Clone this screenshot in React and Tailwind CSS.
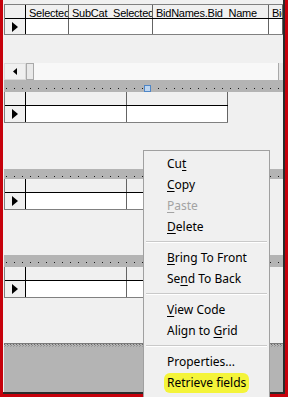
import React from "react";

const gridFont = { fontFamily: '"Liberation Sans", Arial, sans-serif' };
const menuFont = { fontFamily: '"Noto Sans", "Liberation Sans", sans-serif' };

function Arrow() {
  return (
    <svg width="6" height="10" viewBox="0 0 6 10" className="block">
      <path d="M0 0 L6 5 L0 10 Z" fill="#000" />
    </svg>
  );
}

function Grid({ cols, first }) {
  return (
    <div className={`flex flex-col border-l border-[#808080] ${first ? "" : "w-fit"}`} style={gridFont}>
      <div className={`flex border-b border-black bg-[#f0f0f0] ${first ? "h-[15px] border-t border-t-[#808080]" : "h-[14px]"}`}>
        <div className="w-[21px] shrink-0 border-r border-black" />
        {cols.map((c, i) => (
          <div
            key={i}
            className={`${c.w} overflow-hidden whitespace-nowrap border-r border-[#646464] pl-[3px] pt-[2px] text-[11px] leading-[12px] tracking-[-0.25px] text-black`}
          >
            {c.label}
          </div>
        ))}
      </div>
      <div className={`flex border-b border-[#808080] ${first ? "h-[16px]" : "h-[17px]"}`}>
        <div className="flex w-[21px] shrink-0 items-center border-r border-black bg-[#f0f0f0] pl-[7px]">
          <Arrow />
        </div>
        {cols.map((c, i) => (
          <div key={i} className={`${c.w} border-r border-[#646464] bg-white`} />
        ))}
      </div>
    </div>
  );
}

function Bar({ h, pb, handle }) {
  return (
    <div className={`relative flex flex-col justify-end bg-[#b4b4b4] ${h} ${pb}`}>
      <div className="ml-[2px] h-[1px] bg-[linear-gradient(to_right,#1a1a1a_1px,transparent_1px)] bg-[length:8px_1px]" />
      {handle && (
        <div className="absolute left-[140px] top-[5px] h-[7px] w-[7px] border border-[#4f86c6] bg-[#bcd4ef]" />
      )}
    </div>
  );
}

function Item({ children, disabled }) {
  return (
    <div
      className={`flex h-[21px] items-center pl-[23px] text-[12px] ${disabled ? "text-[#a3a3a3]" : "text-black"}`}
    >
      <span className="whitespace-pre">{children}</span>
    </div>
  );
}

function Sep() {
  return (
    <div className="flex h-[10px] flex-col justify-center px-[2px]">
      <div className="h-[1px] bg-[#c9c9c9]" />
      <div className="h-[1px] bg-white" />
    </div>
  );
}

const U = ({ children }) => <span className="underline underline-offset-[2px]">{children}</span>;

export default function App() {
  const small = [
    { w: "w-[101px] shrink-0", label: "" },
    { w: "w-[101px] shrink-0", label: "" },
  ];

  return (
    <div className="relative h-[397px] w-[288px] overflow-hidden bg-[#c6000b] pl-[3px]">
      <div className="flex h-[394px] w-[282px] flex-col border-b-2 border-r-2 border-[#2b2b2b] bg-[#f0f0f0] pl-[1px]">
        <div className="h-[4px] shrink-0" />
        <Grid
          first
          cols={[
            { w: "w-[43px] shrink-0", label: "Selected" },
            { w: "w-[84px] shrink-0", label: "SubCat_Selected" },
            { w: "w-[116px] shrink-0", label: "BidNames.Bid_Name" },
            { w: "min-w-0 flex-1", label: "Bid_Name" },
          ]}
        />
        <div className="h-[28px] shrink-0" />

        {/* horizontal scrollbar */}
        <div className="flex h-[17px] shrink-0">
          <div className="flex w-[22px] items-center justify-center border border-[#d9d9d9] bg-[#f0f0f0]">
            <svg width="4" height="7" viewBox="0 0 4 7">
              <path d="M4 0 L0 3.5 L4 7 Z" fill="#000" />
            </svg>
          </div>
          <div className="w-[8px] border border-[#a9a9a9] bg-[#e9e9e9]" />
          <div className="flex-1 bg-[#f8f8f8]" />
          <div className="w-[5px] border-l border-[#a9a9a9] bg-[#e6e6e6]" />
        </div>

        <Bar h="h-[12px] shrink-0" pb="pb-[3px]" handle />
        <Grid cols={small} />
        <div className="h-[46px] shrink-0" />
        <Bar h="h-[10px] shrink-0" pb="pb-[2px]" />
        <Grid cols={small} />
        <div className="h-[45px] shrink-0" />
        <Bar h="h-[12px] shrink-0" pb="pb-[4px]" />
        <Grid cols={small} />
        <div className="h-[45px] shrink-0" />

        <div className="flex flex-1 flex-col bg-[#b4b4b4]">
          <div className="h-[1px] bg-[#7a7a7a]" />
          <div className="h-[1px] bg-[linear-gradient(to_right,#6a6a6a_1px,transparent_1px)] bg-[length:3px_1px]" />
          <div className="ml-[1px] h-[1px] bg-[linear-gradient(to_right,#8a8a8a_1px,transparent_1px)] bg-[length:3px_1px]" />
          <div className="h-[1px] bg-[linear-gradient(to_right,#9a9a9a_1px,transparent_1px)] bg-[length:3px_1px]" />
        </div>
      </div>

      {/* context menu */}
      <div
        className="absolute left-[143px] top-[150px] h-[250px] w-[127px] border border-[#a0a0a0] bg-[#f0f0f0] pt-[2px]"
        style={menuFont}
      >
        <Item>Cu<U>t</U></Item>
        <Item><U>C</U>opy</Item>
        <Item disabled><U>P</U>aste</Item>
        <Item><U>D</U>elete</Item>
        <Sep />
        <Item><U>B</U>ring To Front</Item>
        <Item>Se<U>n</U>d To Back</Item>
        <Sep />
        <Item><U>V</U>iew Code</Item>
        <Item>Align to <U>G</U>rid</Item>
        <Sep />
        <Item>Properties...</Item>
        <div className="flex h-[21px] items-center pl-[20px] text-[12px] text-black">
          <span className="flex h-[20px] items-center rounded-[6px] bg-[#f4f43a] px-[3px]">
            Retrieve fields
          </span>
        </div>
      </div>
    </div>
  );
}
